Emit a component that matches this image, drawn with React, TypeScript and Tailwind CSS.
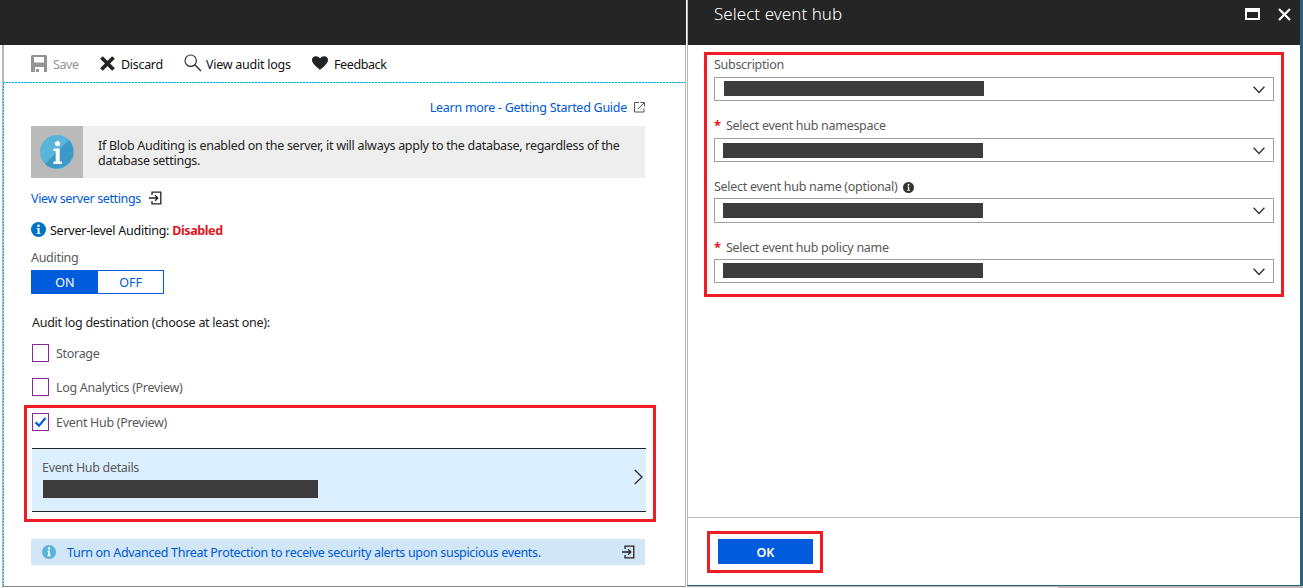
import type { ReactNode } from "react";

function InfoBadge({ className, fill }: { className: string; fill: string }) {
  return (
    <svg viewBox="0 0 16 16" className={className}>
      <circle cx="8" cy="8" r="8" fill={fill} />
      <circle cx="8" cy="4" r="1.35" fill="#fff" />
      <path d="M6.2 6.5h2.9v5.3h1v1H6.1v-1h1V7.5h-.9z" fill="#fff" />
    </svg>
  );
}

function EnterIcon({ className }: { className: string }) {
  return (
    <svg viewBox="0 0 13 14" className={className} fill="none" stroke="#222" strokeWidth="1.3">
      <path d="M3 4V1.2h8.8v11.6H3V10" />
      <path d="M0 7h8.6M6 4.3 8.8 7 6 9.7" />
    </svg>
  );
}

function Toolbar() {
  return (
    <div className="flex h-[37px] items-center border-l-2 border-[#b5b5b5] pl-[27px] text-[#111]">
      <svg viewBox="0 0 16 17" className="h-[17px] w-4">
        <path d="M1 0h14l1 1v16h-3v-5H4v5H0V1zM3 2v5.5h10V2z" fill="#949494" fillRule="evenodd" />
        <path d="M5 14h3v3H5z" fill="#949494" />
      </svg>
      <span className="ml-[6px] w-[47px] pt-[2px] text-[#949494] tracking-[-0.4px]">Save</span>
      <svg viewBox="0 0 15 15" className="h-[15px] w-[15px]" stroke="#222" strokeWidth="3.8">
        <path d="M1.5 1.5l12 12M13.5 1.5l-12 12" />
      </svg>
      <span className="ml-[6px] w-[63px] pt-[2px] tracking-[-0.3px]">Discard</span>
      <svg viewBox="0 0 18 18" className="-mt-px h-[18px] w-[18px]" fill="none" stroke="#333">
        <circle cx="6.7" cy="6.7" r="5.7" strokeWidth="1.2" />
        <path d="M10.8 10.8 17 17" strokeWidth="1.5" />
      </svg>
      <span className="ml-[4px] w-[106px] pt-[2px] tracking-[-0.25px]">View audit logs</span>
      <svg viewBox="0 0 16 14" className="-mt-[2px] h-[14px] w-4" fill="#222">
        <path d="M8 14C6 11.8 0 8 0 4 0 1.600 1.700.3 3.800.3 5.700.3 7 1 8 2.500 9 1 10.300.3 12.200.3 14.300.3 16 1.600 16 4c0 4-6 7.800-8 10z" />
      </svg>
      <span className="ml-[6px] pt-[2px] tracking-[-0.4px]">Feedback</span>
    </div>
  );
}

function Option({ label, checked = false }: { label: string; checked?: boolean }) {
  return (
    <div className="flex h-[18px] items-center">
      <span className="flex h-[18px] w-[17px] items-center justify-center border border-[#862a9b]">
        {checked && (
          <svg viewBox="0 0 13 12" className="h-3 w-[13px]" fill="none" stroke="#005cdc" strokeWidth="2.2">
            <path d="M1.500 6.200 5 9.600 11.500 2" />
          </svg>
        )}
      </span>
      <span className="ml-[7px] pt-[2px] text-[#595959] tracking-[-0.3px]">{label}</span>
    </div>
  );
}

function AuditPanel() {
  return (
    <section className="flex h-[588px] w-[686px] flex-col">
      <header className="h-[45px] bg-[#252525]" />
      <div className="ml-[2px] flex h-[542px] flex-col border-r border-b border-r-[#b9b9b9] border-b-[#858585]">
        <Toolbar />
        <div className="ml-px h-px bg-[repeating-linear-gradient(90deg,#00b4e8_0_2px,#8fdcf3_2px_3px)]" />
        <div className="flex min-h-0 flex-1">
          <div className="w-px bg-[#b9b9b9]" />
          <div className="w-px bg-[repeating-linear-gradient(180deg,#12aee0_0_2px,#c9e9f4_2px_3px)]" />
          <div className="flex w-[642px] flex-col pl-[27px]">
            <div className="mt-[15px] flex h-[18px] items-center justify-end">
              <span className="pt-[2px] text-[#0059d6] tracking-[-0.27px]">Learn more - Getting Started Guide</span>
              <svg viewBox="0 0 11 11" className="mr-px ml-[7px] h-[11px] w-[11px]" fill="none" stroke="#555">
                <path d="M5 .5H.5v9.500h9.500V6.500M6.500.5h4v4M10.300.7 3.800 7.200" />
              </svg>
            </div>
            <div className="mt-[10px] flex h-[52px] w-[614px] bg-[#eeeeee]">
              <div className="flex w-[52px] items-center justify-center bg-[#bababa]">
                <svg viewBox="0 0 34 34" className="h-[34px] w-[34px]">
                  <circle cx="17" cy="17" r="17" fill="#59b4d9" />
                  <path d="M29 5A17 17 0 0 1 5 29z" fill="#3c99c6" />
                  <circle cx="17.500" cy="8.500" r="2.600" fill="#fff" />
                  <path d="M13.500 13.500h6.200v13h2.300V29h-8.600v-2.500h2.300V16h-2.200z" fill="#fff" />
                </svg>
              </div>
              <p className="ml-[15px] pt-[12px] leading-[15px] whitespace-nowrap text-[#222] tracking-[-0.285px]">
                If Blob Auditing is enabled on the server, it will always apply to the database, regardless of the
                <br />
                database settings.
              </p>
            </div>
            <div className="mt-[11px] flex h-[18px] items-center">
              <span className="pt-[2px] text-[#0059d6] tracking-[-0.37px]">View server settings</span>
              <EnterIcon className="ml-[8px] h-[14px] w-[13px]" />
            </div>
            <div className="mt-[14px] flex h-[18px] items-center text-[#111]">
              <InfoBadge className="-mt-[2px] h-[15px] w-[15px]" fill="#0072c6" />
              <span className="ml-[4px] pt-[2px] tracking-[-0.25px]">Server-level Auditing:</span>
              <b className="ml-[3px] pt-[2px] text-[#e0161d] tracking-[-0.4px]">Disabled</b>
            </div>
            <div className="mt-[9px] h-[18px] leading-[20px] text-[#595959] tracking-[-0.3px]">Auditing</div>
            <div className="mt-[4px] flex h-[24px] w-[133px] border border-[#005cdc] leading-[23px]">
              <span className="w-[66px] bg-[#005cdc] text-center text-white">ON</span>
              <span className="flex-1 text-center text-[#0059d6]">OFF</span>
            </div>
            <div className="mt-[19px] ml-px h-[18px] leading-[20px] text-[#222] tracking-[-0.27px]">
              Audit log destination (choose at least one):
            </div>
            <div className="mt-[13px] ml-px flex flex-col gap-4">
              <Option label="Storage" />
              <Option label="Log Analytics (Preview)" />
            </div>
            <div className="mt-[9px] -ml-[7px] h-[117px] w-[632px] shrink-0 border-[3px] border-[#ee1c25] pt-[5px] pl-[5px]">
              <Option label="Event Hub (Preview)" checked />
              <div className="mt-[17px] flex h-[64px] w-[614px] items-center justify-between border-y border-[#222] bg-[#dcefff] pr-[3px] pl-[10px]">
                <div className="-mt-[4px]">
                  <div className="h-[18px] leading-[18px] text-[#595959] tracking-[-0.32px]">Event Hub details</div>
                  <div className="mt-[3px] ml-px h-[18px] w-[275px] bg-[#3c3c3c]" />
                </div>
                <svg viewBox="0 0 9 16" className="mt-[-7px] h-4 w-[9px]" fill="none" stroke="#222" strokeWidth="1.2">
                  <path d="M.8 1 8 8 .8 15" />
                </svg>
              </div>
            </div>
            <div className="mt-[17px] flex h-[26px] w-[614px] shrink-0 items-center bg-[#d1e6f7] pr-[10px] pl-[11px]">
              <InfoBadge className="h-[14px] w-[14px]" fill="#59b4d9" />
              <span className="ml-[11px] flex-1 pt-[2px] text-[#0059d6] tracking-[-0.315px]">
                Turn on Advanced Threat Protection to receive security alerts upon suspicious events.
              </span>
              <EnterIcon className="h-[14px] w-[13px]" />
            </div>
          </div>
        </div>
      </div>
    </section>
  );
}

function Field({
  label,
  required = false,
  hint,
  className,
  boxClass,
  barClass,
}: {
  label: string;
  required?: boolean;
  hint?: ReactNode;
  className: string;
  boxClass: string;
  barClass: string;
}) {
  return (
    <div className={className}>
      <div className="flex h-[18px] items-center text-[#595959]">
        {required && <span className="w-[12px] text-[13px] font-bold text-[#e0161d]">*</span>}
        <span className="pt-[2px] tracking-[-0.29px]">{label}</span>
        {hint}
      </div>
      <div className={`flex w-[560px] justify-between border border-[#a0a0a0] pr-[8px] ${boxClass}`}>
        <div className={`h-[15px] w-[260px] bg-[#3c3c3c] ${barClass}`} />
        <svg viewBox="0 0 12 8" className="mt-[8px] h-[8px] w-3" fill="none" stroke="#333" strokeWidth="1.400">
          <path d="M.6.8 6 6.400 11.400.8" />
        </svg>
      </div>
    </div>
  );
}

function EventHubPanel() {
  return (
    <section className="flex h-[588px] flex-1 flex-col">
      <div className="flex h-[585px]">
        <div className="w-px bg-[#b9b9b9]" />
        <div className="flex w-[612px] flex-col">
          <header className="flex h-[45px] shrink-0 items-start bg-[#252525] pl-[26px] text-white">
            <h1 className="flex-1 pt-px text-[17px] leading-[25px] font-light tracking-[0.05px]">Select event hub</h1>
            <svg viewBox="0 0 15 12" className="mt-[8px] h-3 w-[15px]">
              <path d="M0 0h15v12H0zM2 4v6h11V4z" fill="#fff" fillRule="evenodd" />
            </svg>
            <svg viewBox="0 0 13 13" className="mt-[8px] mr-[9px] ml-[18px] h-[13px] w-[13px]" stroke="#fff" strokeWidth="2.200">
              <path d="M1 1l11 11M12 1 1 12" />
            </svg>
          </header>
          <div className="mt-[7px] ml-[16px] h-[245px] w-[580px] shrink-0 border-[3px] border-[#ee1c25] pl-[7px]">
            <Field className="h-[61px]" label="Subscription" boxClass="mt-[4px] h-[24px]" barClass="mt-[3px] ml-[9px]" />
            <Field className="h-[61px]" label="Select event hub namespace" required boxClass="mt-[4px] h-[24px]" barClass="mt-[4px] ml-[8px]" />
            <Field
              className="h-[61px]"
              label="Select event hub name (optional)"
              hint={<InfoBadge className="mt-[3px] ml-[6px] h-[11px] w-[11px]" fill="#333" />}
              boxClass="mt-[3px] h-[25px]"
              barClass="mt-[4px] ml-[8px]"
            />
            <Field className="h-[56px]" label="Select event hub policy name" required boxClass="mt-[3px] h-[24px]" barClass="mt-[3px] ml-[8px]" />
          </div>
          <footer className="mt-auto h-[68px] border-t border-[#b9b9b9] pt-[13px] pl-[19px]">
            <div className="h-[42px] w-[116px] border-[3px] border-[#ee1c25] pt-[5px] pl-[8px]">
              <button className="block h-[25px] w-[95px] bg-[#005cdc] text-center leading-[27px] font-semibold text-white">OK</button>
            </div>
          </footer>
        </div>
        <div className="w-[3px] bg-[#2b617f]" />
      </div>
      <div className="h-px bg-[#2b617f]" />
      <div className="h-px bg-[#b9b9b9]" />
      <div className="ml-[371px] h-px bg-[#b9b9b9]" />
    </section>
  );
}

export default function App() {
  return (
    <main className="flex h-[588px] w-[1303px] gap-px overflow-hidden bg-white font-['Noto_Sans',sans-serif] text-[12.5px] leading-[18px] whitespace-nowrap">
      <AuditPanel />
      <EventHubPanel />
    </main>
  );
}
